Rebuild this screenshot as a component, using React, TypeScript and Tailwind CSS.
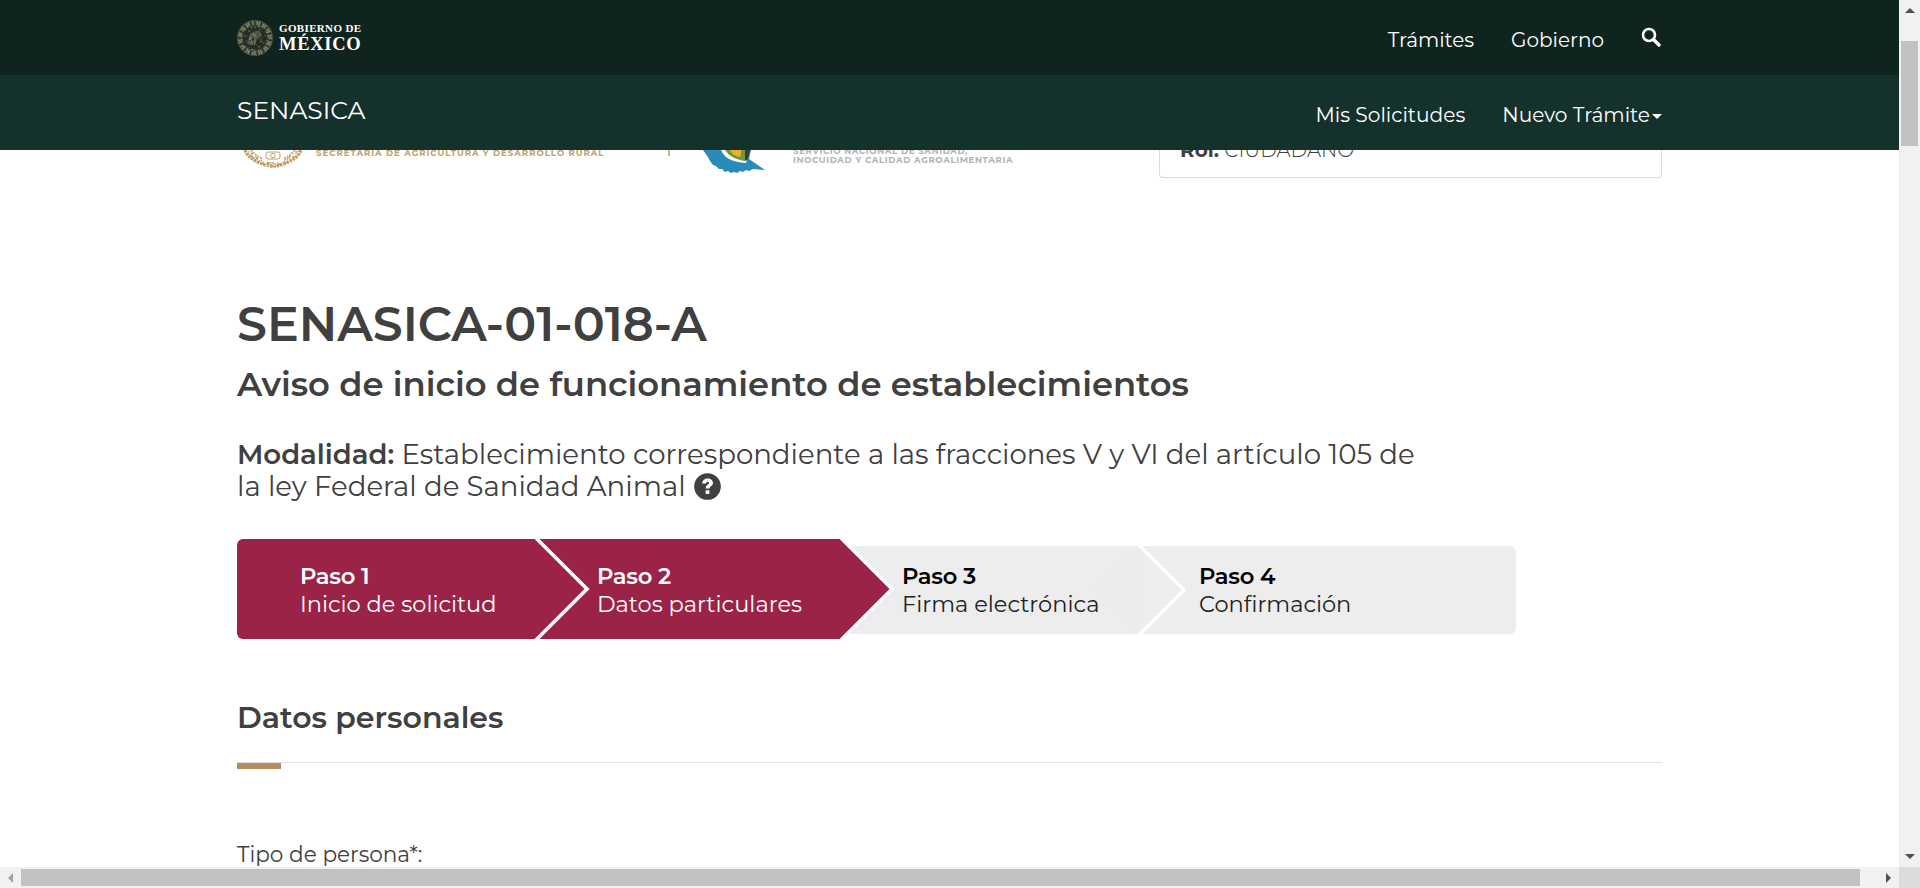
const F = "font-['Montserrat','Inter','Liberation_Sans',sans-serif]";

function speck(n: number, seed: number) {
  const out: { x: number; y: number; r: number; k: number }[] = [];
  let s = seed;
  const rnd = () => {
    s = (s * 9301 + 49297) % 233280;
    return s / 233280;
  };
  for (let i = 0; i < n; i++) out.push({ x: rnd(), y: rnd(), r: rnd(), k: rnd() });
  return out;
}

function Seal({ className }: { className?: string }) {
  const ticks = Array.from({ length: 44 }, (_, i) => (i * 360) / 44);
  const dots = speck(130, 17);
  return (
    <svg viewBox="0 0 36 36" className={className}>
      <circle cx="18" cy="18" r="18" fill="#4d5340" />
      <circle cx="18" cy="18" r="12.5" fill="#242f25" />
      {ticks.map((a, i) => (
        <line key={a} x1="18" y1="1" x2="18" y2={i % 2 ? "4.5" : "5.5"} stroke={i % 3 ? "#8f927a" : "#242c22"} strokeWidth="1" transform={`rotate(${a} 18 18)`} />
      ))}
      <path d="M11 22c1-6 3-10 8-11 4 0 6 3 6 6-2-1-4 0-5 2s-1 5-3 6-5-1-6-3z" fill="#5e634c" />
      {dots.map((d, i) => {
        const ang = d.x * Math.PI * 2;
        const rad = 12.5 * Math.sqrt(d.y);
        return <circle key={i} cx={18 + rad * Math.cos(ang)} cy={18 + rad * Math.sin(ang)} r={0.35 + d.r * 0.35} fill={d.k > 0.55 ? "#8d9079" : "#1b241d"} />;
      })}
    </svg>
  );
}

function Bird() {
  return (
    <svg viewBox="0 0 62 23" className="w-[62px] h-[23px] block">
      <path d="M0 0h36l4 2 6-2h2l-2 9 16 11-12-1-4 2-3-1-3 2-3-1-3 2-3-1-3 1-3-2-3 1-3-3-3 0-3-3-3-1-3-4-2-4z" fill="#2a8ab8" />
      <path d="M18 0c3 7 9 12 25 13 1-3 1-9 1-13z" fill="#fff" />
      <path d="M22 0c4 6 9 9 20 11 1-3 1-8 1-11z" fill="#6f9a3a" />
      <path d="M27 0c2 4 5 6 10 7 1-2 1-5 1-7z" fill="#eeae2f" />
      <path d="M42 0h5l-2 9-3 2z" fill="#3a3a3a" />
    </svg>
  );
}

function GoldWreath() {
  const leaves = speck(70, 5);
  return (
    <svg viewBox="0 0 60 18" className="w-[60px] h-[18px] block">
      <path d="M2 0c2 6 8 10 15 13 5 2 9 3 13 3s8-1 13-3c7-3 13-7 15-13" fill="none" stroke="#c0a06a" strokeWidth="3.4" strokeDasharray="2.6 0.8" />
      <path d="M8 0c3 4 7 7 12 9M52 0c-3 4-7 7-12 9" fill="none" stroke="#c9ae80" strokeWidth="2" strokeDasharray="2 1" />
      {leaves.map((d, i) => {
        const t = d.x;
        const x = 3 + t * 54;
        const y = 16.5 - Math.pow(Math.abs(t - 0.5) * 2, 2) * 16 - d.y * 4;
        return <circle key={i} cx={x} cy={y} r={0.5 + d.r * 0.5} fill={d.k > 0.35 ? "#b9975b" : "#fff"} />;
      })}
      <rect x="23" y="2" width="14" height="7" rx="2" fill="none" stroke="#b9975b" strokeWidth="0.9" />
      <circle cx="30" cy="5.5" r="2.2" fill="none" stroke="#b9975b" strokeWidth="0.9" />
    </svg>
  );
}

const title = "text-[22.7px] leading-[28px] font-semibold tracking-[-0.3px]";
const subtitle = "text-[22.5px] leading-[28px] font-normal whitespace-nowrap";

function ArrowV({ up }: { up?: boolean }) {
  return <div className={`w-0 h-0 border-l-[5px] border-r-[5px] border-l-transparent border-r-transparent ${up ? "border-b-[5px] border-b-[#505050]" : "border-t-[5px] border-t-[#505050]"}`} />;
}

export default function App() {
  return (
    <div className={`w-[1920px] h-[888px] overflow-hidden bg-white flex flex-col ${F}`}>
      <div className="flex flex-1 min-h-0">
        <div className="flex-1 min-w-0 overflow-hidden flex flex-col">
          {/* top bar */}
          <header className="h-[75px] shrink-0 bg-[#0f241e] pl-[237px] pr-[237px] flex items-center justify-between">
            <div className="flex items-center gap-[6px]">
              <Seal className="w-9 h-9" />
              <div className="font-['Liberation_Serif',serif] font-bold text-white">
                <div className="text-[11px] leading-[11px] mb-[2px] tracking-[0.35px] whitespace-nowrap">GOBIERNO DE</div>
                <div className="text-[18.5px] leading-[17px] tracking-[0.7px] whitespace-nowrap">MÉXICO</div>
              </div>
            </div>
            <nav className="flex items-center text-white text-[20px] font-normal">
              <span className="mr-[37px] mt-[4px]">Trámites</span>
              <span className="mr-[37px] mt-[4px]">Gobierno</span>
              <svg viewBox="0 0 20 20" className="w-5 h-5 mb-[2px] mr-[1px]" fill="none" stroke="#fff">
                <circle cx="8" cy="8" r="6" strokeWidth="2.6" />
                <path d="M12.5 12.5L18 18" strokeWidth="3.4" strokeLinecap="round" />
              </svg>
            </nav>
          </header>
          <div className="h-[75px] shrink-0 bg-[#15312c] pl-[237px] pr-[237px] flex items-center justify-between text-white">
            <span className="text-[25px] font-normal mb-[3px]">SENASICA</span>
            <nav className="flex items-center text-[20.2px] mt-[6px]">
              <span className="mr-[37px]">Mis Solicitudes</span>
              <span>Nuevo Trámite</span>
              <span className="ml-[2px] mt-[3px] w-0 h-0 border-l-[5px] border-r-[5px] border-t-[5px] border-l-transparent border-r-transparent border-t-white" />
            </nav>
          </div>

          {/* clipped logos row */}
          <div className="h-[28px] shrink-0 pl-[237px] pr-[237px] flex items-start overflow-hidden">
            <div className="w-[6px] shrink-0" />
            <div className="shrink-0"><GoldWreath /></div>
            <div className="ml-[13px] mt-[-3px] text-[8.6px] leading-[12px] font-bold tracking-[0.97px] text-[#c0a26d] whitespace-nowrap w-[353px]">SECRETARÍA DE AGRICULTURA Y DESARROLLO RURAL</div>
            <div className="w-[2px] h-[6px] bg-[#cdb58b] shrink-0" />
            <div className="ml-[33px] shrink-0"><Bird /></div>
            <div className="ml-[28px] w-[366px] shrink-0 mt-[-3px] text-[8.6px] leading-[9px] font-bold tracking-[0.65px] text-[#b4b4b4] whitespace-nowrap">
              <div>SERVICIO NACIONAL DE SANIDAD,</div>
              <div>INOCUIDAD Y CALIDAD AGROALIMENTARIA</div>
            </div>
            <div className="w-[503px] h-[28px] shrink-0 border border-t-0 border-[#dcdcdc] rounded-b-[4px] pl-[20px] overflow-hidden">
              <div className="mt-[-12px] text-[20px] leading-[24px] text-[#404041] whitespace-nowrap">
                <b className="font-bold">Rol:</b> <span className="font-light">CIUDADANO</span>
              </div>
            </div>
          </div>

          <main className="pl-[237px] text-[#404041]">
            <h1 className="mt-[118px] text-[47.5px] leading-[56px] font-semibold whitespace-nowrap">SENASICA-01-018-A</h1>
            <h2 className="mt-[12px] text-[33.8px] leading-[40px] font-semibold whitespace-nowrap">Aviso de inicio de funcionamiento de establecimientos</h2>
            <p className="mt-[34px] w-[1200px] text-[27.6px] leading-[32px] font-normal">
              <b className="font-semibold">Modalidad:</b> Establecimiento correspondiente a las fracciones V y VI del artículo 105 de la ley Federal de Sanidad Animal{" "}
              <svg viewBox="0 0 28 28" className="inline-block w-[27px] h-[27px] align-[-4px] ml-[1px]">
                <circle cx="14" cy="14" r="13.8" fill="#404041" />
                <path d="M8.5 11c.2-3.6 2.6-5.4 5.7-5.4 3.2 0 5.5 2 5.5 4.6 0 3.6-3.6 3.6-3.6 6h-4c0-4 3.5-4 3.5-5.8 0-.8-.6-1.3-1.4-1.3-1 0-1.6.7-1.8 1.9z" fill="#fff" />
                <rect x="12" y="18" width="4" height="3.8" rx=".7" fill="#fff" />
              </svg>
            </p>

            <div className="mt-[37px] flex items-center w-[1279px]">
              <div className="w-[299px] h-[100px] shrink-0 relative flex flex-col justify-center pt-[2px] pl-[63px] bg-[#9b2348] text-white rounded-l-[6px]">
                <span className={title}>Paso 1</span>
                <span className={subtitle}>Inicio de solicitud</span>
                <svg className="absolute z-10 top-0 right-[-52px] h-[100px] w-[52px] overflow-visible" viewBox="0 0 52 100">
                  <path d="M0 -1 L51 50 L0 101" fill="#9b2348" stroke="#fff" strokeWidth="3.6" />
                </svg>
              </div>
              <div className="w-[305px] h-[100px] shrink-0 relative flex flex-col justify-center pt-[2px] pl-[61px] bg-[#9b2348] text-white">
                <span className={title}>Paso 2</span>
                <span className={subtitle}>Datos particulares</span>
                <svg className="absolute z-10 top-0 right-[-52px] h-[100px] w-[52px] overflow-visible" viewBox="0 0 52 100">
                  <path d="M0 -1 L51 50 L0 101" fill="#9b2348" stroke="#fff" strokeWidth="3.6" />
                </svg>
              </div>
              <div className="w-[298px] h-[88px] mt-[2px] shrink-0 bg-[#ededed] relative flex flex-col justify-center pl-[61px] text-black">
                <span className={title}>Paso 3</span>
                <span className={`${subtitle} text-[#222]`}>Firma electrónica</span>
                <svg className="absolute z-10 top-0 right-[-46px] h-[88px] w-[46px] overflow-visible" viewBox="0 0 46 88">
                  <path d="M0 0 L-44 44 L0 88z" fill="#ececec" />
                  <path d="M0 -1 L45 44 L0 89" fill="#ededed" stroke="#fff" strokeWidth="3.6" />
                </svg>
              </div>
              <div className="flex-1 h-[88px] mt-[2px] bg-[#ededed] rounded-r-[6px] flex flex-col justify-center pl-[60px] text-black">
                <span className={title}>Paso 4</span>
                <span className={`${subtitle} text-[#222]`}>Confirmación</span>
              </div>
            </div>

            <h3 className="mt-[59px] text-[30px] leading-[40px] font-semibold whitespace-nowrap">Datos personales</h3>
            <div className="mt-[24px] w-[1425px] h-[1px] bg-[#e0e0e0]" />
            <div className="w-[44px] h-[6px] bg-[#b38e5d]" />
            <div className="mt-[71px] text-[21.6px] leading-[28px] whitespace-nowrap">Tipo de persona*:</div>
          </main>
        </div>
        {/* vertical scrollbar */}
        <div className="w-[21px] shrink-0 bg-[#f1f1f1] flex flex-col items-center">
          <div className="h-[21px] shrink-0 flex items-center justify-center"><ArrowV up /></div>
          <div className="w-[17px] h-[105px] mt-[20px] bg-[#c1c1c1]" />
          <div className="flex-1" />
          <div className="h-[21px] shrink-0 flex items-center justify-center"><ArrowV /></div>
        </div>
      </div>
      {/* horizontal scrollbar */}
      <div className="h-[21px] shrink-0 bg-[#f1f1f1] flex items-center">
        <div className="w-[21px] shrink-0 flex justify-center">
          <div className="w-0 h-0 border-t-[5px] border-b-[5px] border-r-[5px] border-t-transparent border-b-transparent border-r-[#a3a3a3]" />
        </div>
        <div className="h-[17px] w-[1839px] bg-[#c1c1c1]" />
        <div className="flex-1 flex justify-end pr-[8px]">
          <div className="w-0 h-0 border-t-[5px] border-b-[5px] border-l-[5px] border-t-transparent border-b-transparent border-l-[#505050]" />
        </div>
        <div className="w-[21px] h-[21px] shrink-0 bg-[#dcdcdc]" />
      </div>
    </div>
  );
}
